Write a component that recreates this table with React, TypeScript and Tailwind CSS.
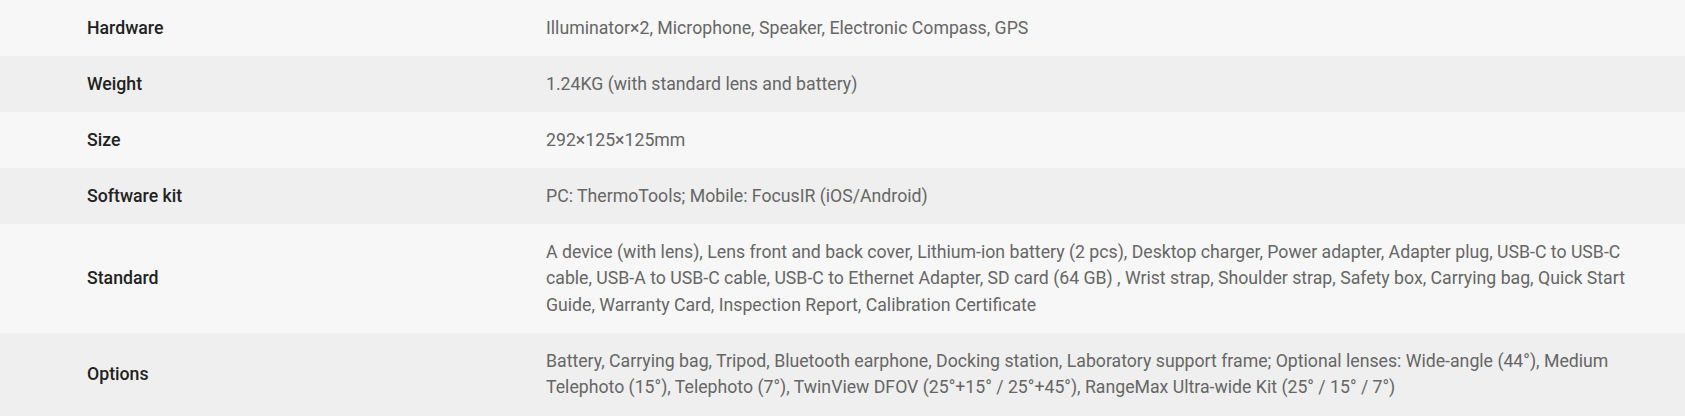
import React from "react";

const rows: { label: string; value: string }[] = [
  { label: "Hardware", value: "Illuminator×2, Microphone, Speaker, Electronic Compass, GPS" },
  { label: "Weight", value: "1.24KG (with standard lens and battery)" },
  { label: "Size", value: "292×125×125mm" },
  { label: "Software kit", value: "PC: ThermoTools; Mobile: FocusIR (iOS/Android)" },
  {
    label: "Standard",
    value:
      "A device (with lens), Lens front and back cover, Lithium-ion battery (2 pcs), Desktop charger, Power adapter, Adapter plug, USB-C to USB-C cable, USB-A to USB-C cable, USB-C to Ethernet Adapter, SD card (64 GB) , Wrist strap, Shoulder strap, Safety box, Carrying bag, Quick Start Guide, Warranty Card, Inspection Report, Calibration Certificate",
  },
  {
    label: "Options",
    value:
      "Battery, Carrying bag, Tripod, Bluetooth earphone, Docking station, Laboratory support frame; Optional lenses: Wide-angle (44°), Medium Telephoto (15°), Telephoto (7°), TwinView DFOV (25°+15° / 25°+45°), RangeMax Ultra-wide Kit (25° / 15° / 7°)",
  },
];

export default function App() {
  return (
    <div className="w-[1685px] bg-white font-['Roboto',sans-serif] text-[17.7px] leading-[26.5px]">
      {rows.map((r, i) => (
        <div
          key={r.label}
          className={`grid grid-cols-[546px_1fr] items-center ${i % 2 === 0 ? "bg-[#f7f7f7]" : "bg-[#efefef]"}`}
        >
          <div className="pl-[87px] py-[14.75px] font-medium text-[#222222]">{r.label}</div>
          <div className="pr-[30px] py-[14.75px] text-[#666666]">{r.value}</div>
        </div>
      ))}
    </div>
  );
}
